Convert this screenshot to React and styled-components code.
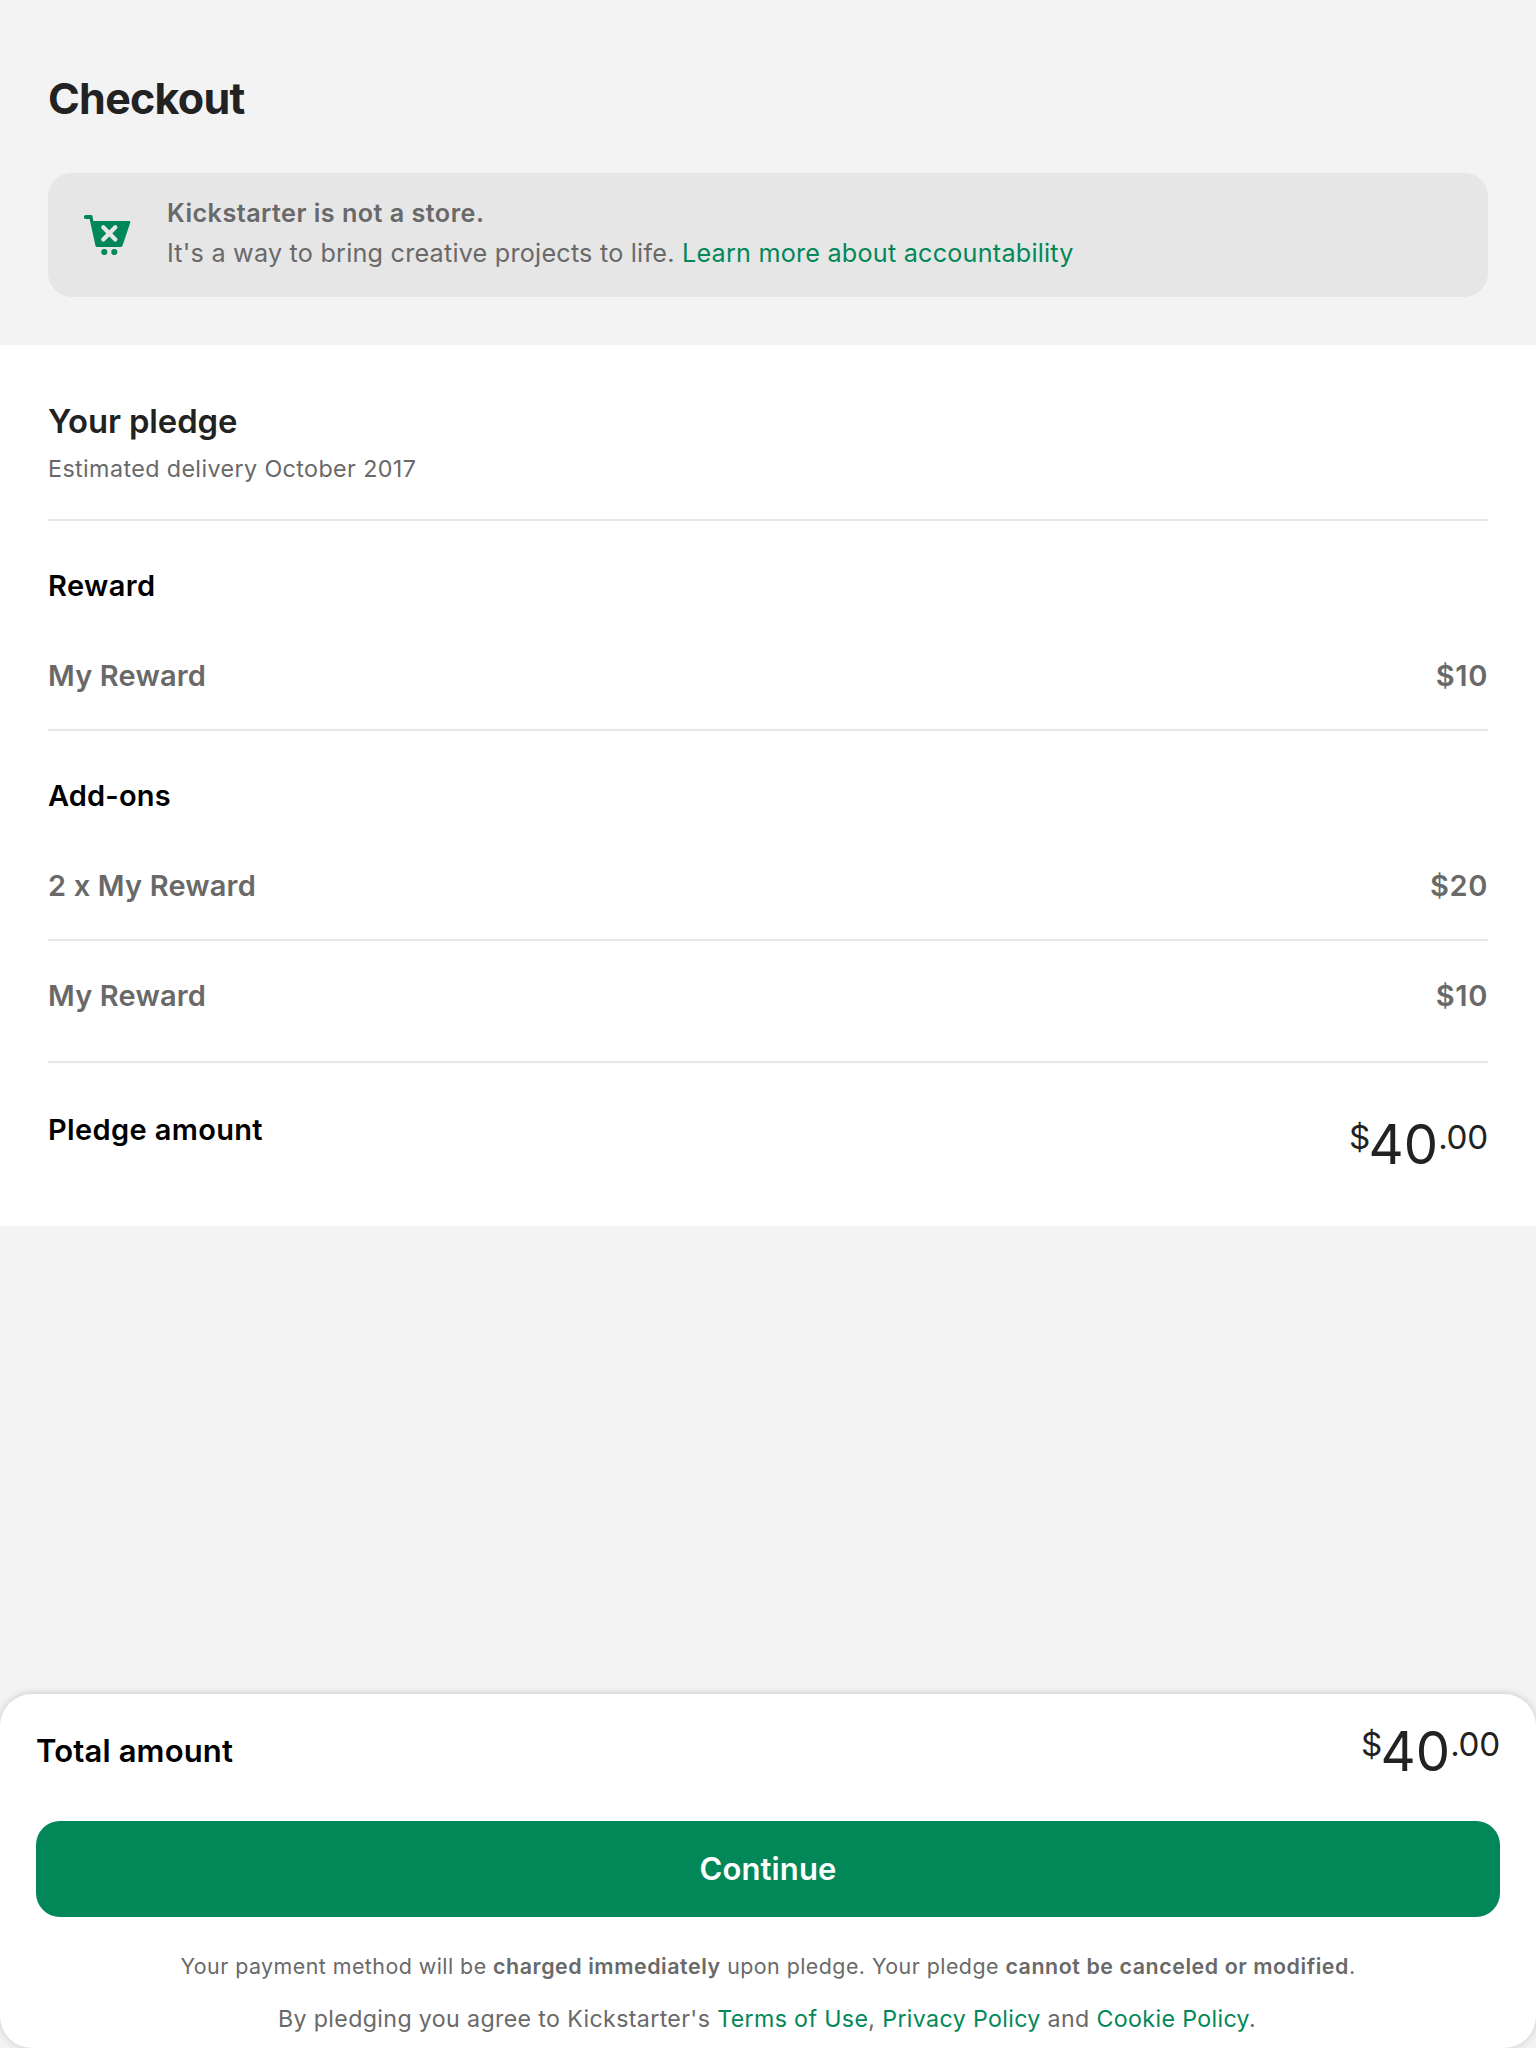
import React from "react";
import styled, { createGlobalStyle } from "styled-components";

const color = {
  page: "#f3f3f3",
  banner: "#e6e6e6",
  line: "#e6e6e6",
  white: "#ffffff",
  black: "#000000",
  ink: "#222222",
  muted: "#696969",
  green: "#028858",
};

const GlobalStyle = createGlobalStyle`
  *, *::before, *::after { box-sizing: border-box; }
  body {
    margin: 0;
    background: ${color.page};
    font-family: Inter, "Liberation Sans", sans-serif;
    font-kerning: normal;
  }
`;

const Page = styled.div`
  display: flex;
  flex-direction: column;
  height: 2048px;
  overflow: hidden;
  background: ${color.page};
`;

const Header = styled.header`
  padding: 72px 48px 48px;
`;

const Title = styled.h1`
  margin: 0 0 49px;
  font-size: 43px;
  line-height: 52px;
  font-weight: 700;
  letter-spacing: -0.72px;
  color: ${color.ink};
`;

const Banner = styled.aside`
  display: flex;
  align-items: flex-start;
  gap: 36px;
  height: 124px;
  padding: 20px 36px 24px;
  border-radius: 24px;
  background: ${color.banner};
`;

const CartIcon = styled.svg`
  flex: none;
  width: 47px;
  height: 40px;
  margin-top: 22px;
`;

const BannerText = styled.p`
  margin: 0;
  font-size: 25.2px;
  line-height: 40px;
  letter-spacing: 0.22px;
  color: ${color.muted};
`;

const BannerLead = styled.strong`
  display: block;
  font-weight: 600;
  letter-spacing: 0.46px;
`;

const Link = styled.a`
  color: ${color.green};
  text-decoration: none;
`;

const Pledge = styled.main`
  padding: 56px 48px 49px;
  background: ${color.white};
`;

const PledgeIntro = styled.div`
  padding-bottom: 34px;
  border-bottom: 2px solid ${color.line};
`;

const PledgeTitle = styled.h2`
  margin: 0 0 12px;
  font-size: 32.8px;
  line-height: 40px;
  font-weight: 600;
  letter-spacing: -0.1px;
  color: ${color.ink};
`;

const Delivery = styled.p`
  margin: 0;
  font-size: 23.3px;
  line-height: 32px;
  letter-spacing: 0.39px;
  color: ${color.muted};
`;

const GroupTitle = styled.h3`
  margin: 0;
  padding: 47px 0 17px;
  font-size: 29px;
  line-height: 36px;
  font-weight: 600;
  letter-spacing: ${(p) => p.$tracking || 0.4}px;
  color: ${color.black};
`;

const ItemRow = styled.div`
  display: flex;
  justify-content: space-between;
  padding: 37px 0 ${(p) => (p.$last ? 47 : 35)}px;
  border-bottom: 2px solid ${color.line};
  font-size: 29px;
  line-height: 36px;
  font-weight: 600;
  letter-spacing: 0.17px;
  color: ${color.muted};
`;

const Price = styled.span`
  letter-spacing: 0.65px;
`;

const TotalRow = styled.div`
  display: flex;
  justify-content: space-between;
  align-items: ${(p) => (p.$centered ? "center" : "flex-start")};
`;

const PledgeTotal = styled(TotalRow)`
  padding-top: 48px;
`;

const TotalLabel = styled.span`
  margin-top: ${(p) => (p.$large ? 0 : 1)}px;
  font-size: ${(p) => (p.$large ? 31 : 29)}px;
  line-height: ${(p) => (p.$large ? 38 : 36)}px;
  font-weight: 600;
  letter-spacing: ${(p) => (p.$large ? 0.15 : 0.36)}px;
  color: ${color.black};
`;

const AmountBox = styled.span`
  display: flex;
  align-items: flex-start;
  color: ${color.ink};
`;

const AmountMain = styled.span`
  font-size: 54.5px;
  line-height: 66px;
`;

const AmountSmall = styled.span`
  margin-top: 6px;
  font-size: 33.2px;
  line-height: 40px;
  letter-spacing: -0.25px;
`;

const AmountSymbol = styled(AmountSmall)`
  margin-right: -1.5px;
`;

const Sheet = styled.footer`
  margin-top: auto;
  padding: 24px 36px 13px;
  border-radius: 32px;
  background: ${color.white};
  box-shadow: 0 0 9px rgba(0, 0, 0, 0.18);
`;

const ContinueButton = styled.button`
  display: block;
  width: 100%;
  height: 96px;
  margin: 37px 0 35px;
  padding: 0;
  border: 0;
  border-radius: 24px;
  background: ${color.green};
  color: ${color.white};
  font: 600 31px/38px Inter, "Liberation Sans", sans-serif;
  letter-spacing: 0.1px;
`;

const ChargeNote = styled.p`
  margin: 0 0 23px;
  font-size: 21.4px;
  line-height: 28px;
  letter-spacing: 0.46px;
  text-align: center;
  color: ${color.muted};

  strong {
    font-weight: 600;
    letter-spacing: 0.56px;
  }
`;

const TermsNote = styled.p`
  margin: 0;
  padding-right: 2px;
  font-size: 23.2px;
  line-height: 32px;
  letter-spacing: 0.36px;
  text-align: center;
  color: ${color.muted};
`;

function Cart() {
  return (
    <CartIcon viewBox="0 0 47 40" aria-hidden="true">
      <path
        fill={color.green}
        d="M1.9 0H7.2Q8.1 0 8.4 1L9.4 6H45.2Q46.8 6 46.3 7.5L38.6 30.6Q38.1 32 36.8 32H13.2Q11.7 32 11.4 30.5L5.6 4H1.9A2 2 0 0 1 1.9 0Z"
      />
      <circle cx="20.3" cy="37" r="3.1" fill={color.green} />
      <circle cx="30.3" cy="37" r="3.1" fill={color.green} />
      <path
        d="M19.3 12.3 31.3 24.5M31.3 12.3 19.3 24.5"
        stroke={color.banner}
        strokeWidth="4.3"
        strokeLinecap="round"
      />
    </CartIcon>
  );
}

function Amount() {
  return (
    <AmountBox>
      <AmountSymbol>$</AmountSymbol>
      <AmountMain>40</AmountMain>
      <AmountSmall>.00</AmountSmall>
    </AmountBox>
  );
}

function Item({ name, price, last }) {
  return (
    <ItemRow $last={last}>
      <span>{name}</span>
      <Price>{price}</Price>
    </ItemRow>
  );
}

export default function App() {
  return (
    <Page>
      <GlobalStyle />
      <Header>
        <Title>Checkout</Title>
        <Banner>
          <Cart />
          <BannerText>
            <BannerLead>Kickstarter is not a store.</BannerLead>
            It's a way to bring creative projects to life. <Link>Learn more about accountability</Link>
          </BannerText>
        </Banner>
      </Header>

      <Pledge>
        <PledgeIntro>
          <PledgeTitle>Your pledge</PledgeTitle>
          <Delivery>Estimated delivery October 2017</Delivery>
        </PledgeIntro>
        <GroupTitle>Reward</GroupTitle>
        <Item name="My Reward" price="$10" />
        <GroupTitle $tracking={0.15}>Add-ons</GroupTitle>
        <Item name="2 x My Reward" price="$20" />
        <Item name="My Reward" price="$10" last />
        <PledgeTotal>
          <TotalLabel>Pledge amount</TotalLabel>
          <Amount />
        </PledgeTotal>
      </Pledge>

      <Sheet>
        <TotalRow $centered>
          <TotalLabel $large>Total amount</TotalLabel>
          <Amount />
        </TotalRow>
        <ContinueButton type="button">Continue</ContinueButton>
        <ChargeNote>
          Your payment method will be <strong>charged immediately</strong> upon pledge. Your pledge{" "}
          <strong>cannot be canceled or modified</strong>.
        </ChargeNote>
        <TermsNote>
          By pledging you agree to Kickstarter's <Link>Terms of Use</Link>, <Link>Privacy Policy</Link> and{" "}
          <Link>Cookie Policy</Link>.
        </TermsNote>
      </Sheet>
    </Page>
  );
}
